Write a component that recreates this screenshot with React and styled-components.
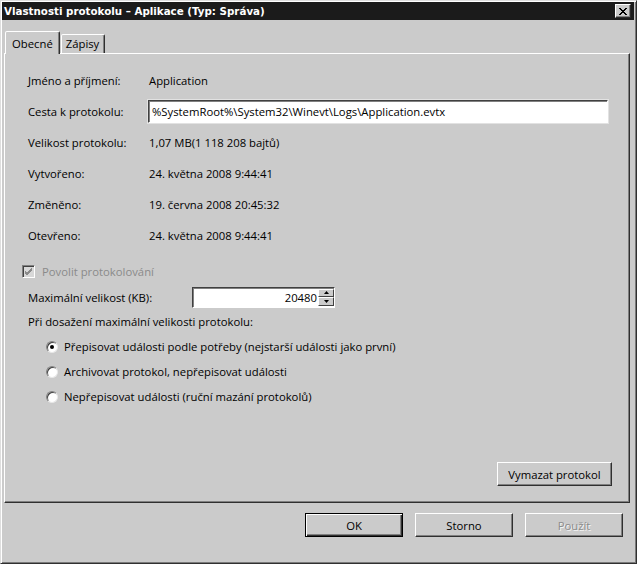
import React from "react";
import styled, { createGlobalStyle } from "styled-components";

const Global = createGlobalStyle`
  html, body { margin: 0; padding: 0; background: #cbcbcb; }
  * { box-sizing: border-box; }
`;

const FONT = `"Open Sans", "Noto Sans", "DejaVu Sans", sans-serif`;

const Window = styled.div`
  width: 637px;
  height: 564px;
  background: #cbcbcb;
  border: 1px solid;
  border-color: #dedede #303030 #303030 #dedede;
  box-shadow: inset 1px 1px 0 #ffffff, inset -1px -1px 0 #7a7a7a;
  display: flex;
  flex-direction: column;
  font-family: ${FONT};
  font-size: 11.3px;
  color: #000;
`;

const TitleBar = styled.div`
  height: 18px;
  margin: 1px 2px 0 1px;
  background: #1b1b1b;
  color: #fff;
  font-family: "DejaVu Sans", Tahoma, sans-serif;
  font-weight: bold;
  font-size: 10.3px;
  display: flex;
  align-items: center;
  justify-content: space-between;
  padding: 0 3px 0 2px;
`;

const CloseButton = styled.div`
  width: 16px;
  height: 14px;
  background: #cbcbcb;
  border: 1px solid;
  border-color: #ffffff #2a2a2a #2a2a2a #ffffff;
  box-shadow: inset -1px -1px 0 #808080;
  display: flex;
  align-items: center;
  justify-content: center;
`;

const Body = styled.div`
  flex: 1;
  display: flex;
  flex-direction: column;
  padding: 11px 6px 0 3px;
`;

const TabStrip = styled.div`
  display: flex;
  align-items: flex-end;
  height: 22px;
  padding-left: 1px;
  position: relative;
  z-index: 1;
`;

const Tab = styled.div`
  height: ${(p) => (p.$active ? "23px" : "19px")};
  margin-bottom: ${(p) => (p.$active ? "-1px" : "0")};
  padding: ${(p) => (p.$active ? "2px 6px 0 6px" : "0 5px 0 4px")};
  margin-left: ${(p) => (p.$active ? "0" : "1px")};
  background: #cbcbcb;
  border: 1px solid;
  border-bottom: none;
  border-color: #ffffff #303030 transparent #ffffff;
  box-shadow: inset -1px 0 0 #808080;
  border-radius: 2px 2px 0 0;
  display: flex;
  align-items: center;
  line-height: 1;
`;

const Panel = styled.div`
  height: 450px;
  border: 1px solid;
  border-color: #ffffff #303030 #303030 #ffffff;
  box-shadow: inset -1px -1px 0 #808080;
  display: flex;
  flex-direction: column;
  padding: 11px 17px 0 23px;
`;

const InfoRow = styled.div`
  display: grid;
  grid-template-columns: 121px 1fr;
  align-items: center;
  height: 31px;
`;

const PathField = styled.div`
  height: 23px;
  background: #fff;
  border: 1px solid;
  border-color: #404040 #ffffff #ffffff #404040;
  box-shadow: inset 1px 1px 0 #808080;
  outline: 1px solid #e2e2e2;
  display: flex;
  align-items: center;
  padding-left: 3px;
  margin-left: -1px;
  width: 460px;
`;

const CheckRow = styled.div`
  display: flex;
  align-items: center;
  gap: 7px;
  margin: 10px 0 0 -6px;
  height: 20px;
  color: #8a8a8a;
`;

const CheckBox = styled.div`
  width: 13px;
  height: 13px;
  background: #d8d8d8;
  border: 1px solid;
  border-color: #808080 #ffffff #ffffff #808080;
  box-shadow: inset 1px 1px 0 #404040;
  display: flex;
  align-items: center;
  justify-content: center;
`;

const SizeRow = styled.div`
  display: flex;
  align-items: center;
  height: 24px;
  margin-top: 4px;
`;

const SizeLabel = styled.div`
  width: 164px;
`;

const Spin = styled.div`
  width: 143px;
  height: 21px;
  background: #fff;
  border: 1px solid;
  border-color: #404040 #ffffff #ffffff #404040;
  box-shadow: inset 1px 1px 0 #808080;
  display: flex;
  align-items: stretch;
`;

const SpinValue = styled.div`
  flex: 1;
  padding-right: 1px;
  display: flex;
  align-items: center;
  justify-content: flex-end;
`;

const SpinButtons = styled.div`
  width: 16px;
  display: flex;
  flex-direction: column;
  padding: 1px 0;
`;

const SpinButton = styled.div`
  flex: 1;
  background: #cbcbcb;
  border: 1px solid;
  border-color: #ffffff #404040 #404040 #ffffff;
  display: flex;
  align-items: center;
  justify-content: center;
`;

const Text = styled.div`
  height: 24px;
  display: flex;
  align-items: center;
`;

const RadioGroup = styled.div`
  display: flex;
  flex-direction: column;
  padding-left: 18px;
  margin-top: 1px;
`;

const RadioRow = styled.div`
  display: flex;
  align-items: center;
  gap: 6px;
  height: 25px;
`;

const RadioDot = styled.div`
  width: 12px;
  height: 12px;
  border-radius: 50%;
  background: #fff;
  border: 1px solid;
  border-color: #808080 #e8e8e8 #e8e8e8 #808080;
  box-shadow: inset 1px 1px 0 #404040;
  display: flex;
  align-items: center;
  justify-content: center;
  &::after {
    content: "";
    width: 4px;
    height: 4px;
    border-radius: 50%;
    background: ${(p) => (p.$checked ? "#000" : "transparent")};
  }
`;

const ClearRow = styled.div`
  margin-top: auto;
  margin-bottom: 16px;
  display: flex;
  justify-content: flex-end;
`;

const Button = styled.div`
  width: ${(p) => p.$w || 98}px;
  height: ${(p) => p.$h || 24}px;
  background: #cbcbcb;
  border: 1px solid;
  border-color: ${(p) => (p.$default ? "#000" : "#ffffff #303030 #303030 #ffffff")};
  box-shadow: ${(p) =>
    p.$default
      ? "inset 1px 1px 0 #ffffff, inset -1px -1px 0 #303030, inset -2px -2px 0 #808080"
      : "inset -1px -1px 0 #808080"};
  display: flex;
  align-items: center;
  justify-content: center;
  color: ${(p) => (p.$disabled ? "#8c8c8c" : "#000")};
  text-shadow: ${(p) => (p.$disabled ? "1px 1px 0 #f4f4f4" : "none")};
`;

const Footer = styled.div`
  display: flex;
  justify-content: flex-end;
  gap: 12px;
  padding: 10px 7px 0 0;
`;

const info = [
  ["Jméno a příjmení:", "Application"],
  ["Cesta k protokolu:", null],
  ["Velikost protokolu:", "1,07 MB(1 118 208 bajtů)"],
  ["Vytvořeno:", "24. května 2008 9:44:41"],
  ["Změněno:", "19. června 2008 20:45:32"],
  ["Otevřeno:", "24. května 2008 9:44:41"],
];

const radios = [
  ["Přepisovat události podle potřeby (nejstarší události jako první)", true],
  ["Archivovat protokol, nepřepisovat události", false],
  ["Nepřepisovat události (ruční mazání protokolů)", false],
];

export default function App() {
  return (
    <>
      <Global />
      <Window>
        <TitleBar>
          <span>Vlastnosti protokolu – Aplikace (Typ: Správa)</span>
          <CloseButton>
            <svg width="8" height="7" viewBox="0 0 8 7">
              <path d="M0 0 L7 7 M1 0 L8 7 M7 0 L0 7 M8 0 L1 7" stroke="#000" strokeWidth="1" />
            </svg>
          </CloseButton>
        </TitleBar>
        <Body>
          <TabStrip>
            <Tab $active>Obecné</Tab>
            <Tab>Zápisy</Tab>
          </TabStrip>
          <Panel>
            {info.map(([label, value]) => (
              <InfoRow key={label}>
                <span>{label}</span>
                {value ? (
                  <span>{value}</span>
                ) : (
                  <PathField>%SystemRoot%\System32\Winevt\Logs\Application.evtx</PathField>
                )}
              </InfoRow>
            ))}
            <CheckRow>
              <CheckBox>
                <svg width="9" height="9" viewBox="0 0 9 9">
                  <path d="M1 4 L3 6 L8 1 M1 5 L3 7 L8 2 M1 6 L3 8 L8 3" stroke="#8a8a8a" strokeWidth="1" fill="none" />
                </svg>
              </CheckBox>
              <span>Povolit protokolování</span>
            </CheckRow>
            <SizeRow>
              <SizeLabel>Maximální velikost (KB):</SizeLabel>
              <Spin>
                <SpinValue>20480</SpinValue>
                <SpinButtons>
                  <SpinButton>
                    <svg width="5" height="3" viewBox="0 0 5 3"><path d="M2.5 0 L5 3 L0 3 Z" fill="#000" /></svg>
                  </SpinButton>
                  <SpinButton>
                    <svg width="5" height="3" viewBox="0 0 5 3"><path d="M0 0 L5 0 L2.5 3 Z" fill="#000" /></svg>
                  </SpinButton>
                </SpinButtons>
              </Spin>
            </SizeRow>
            <Text>Při dosažení maximální velikosti protokolu:</Text>
            <RadioGroup>
              {radios.map(([label, checked]) => (
                <RadioRow key={label}>
                  <RadioDot $checked={checked} />
                  <span>{label}</span>
                </RadioRow>
              ))}
            </RadioGroup>
            <ClearRow>
              <Button $w={115} $h={24}>Vymazat protokol</Button>
            </ClearRow>
          </Panel>
          <Footer>
            <Button $default>OK</Button>
            <Button>Storno</Button>
            <Button $disabled>Použít</Button>
          </Footer>
        </Body>
      </Window>
    </>
  );
}
